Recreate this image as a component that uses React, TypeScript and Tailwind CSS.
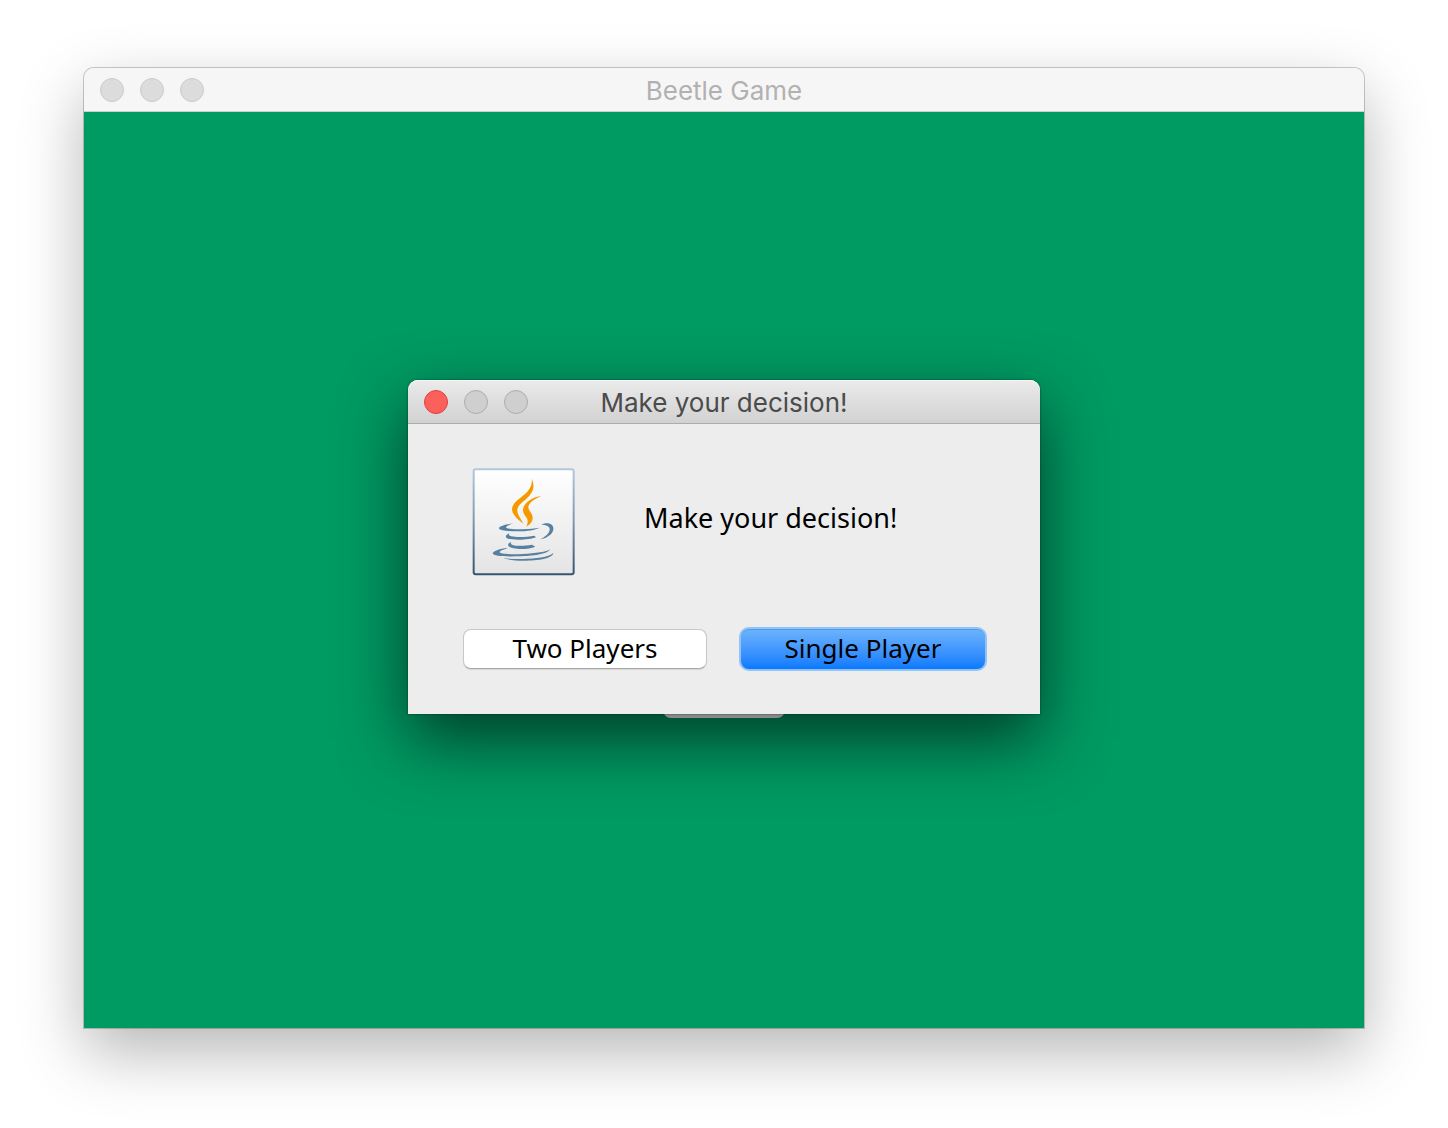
import React from "react";

function TrafficLights({ active = false }: { active?: boolean }) {
  const idle = active
    ? "border-[#acacac] bg-[#cfcfcf]"
    : "border-[#cbcbcb] bg-[#dcdcdc]";
  const close = active ? "border-[#e2403f] bg-[#fc605c]" : idle;
  return (
    <div className="flex gap-4">
      <button aria-label="Close" className={`size-6 rounded-full border ${close}`} />
      <button aria-label="Minimize" className={`size-6 rounded-full border ${idle}`} />
      <button aria-label="Zoom" className={`size-6 rounded-full border ${idle}`} />
    </div>
  );
}

function JavaIcon() {
  return (
    <svg viewBox="25 26 312 324" className="h-[108px] w-[104px] shrink-0" role="img" aria-label="Java">
      <defs>
        <linearGradient id="paper" x1="0" y1="0" x2="0" y2="1">
          <stop offset="0" stopColor="#ffffff" />
          <stop offset="1" stopColor="#e4e4e4" />
        </linearGradient>
        <linearGradient id="frame" x1="0" y1="0" x2="0" y2="1">
          <stop offset="0" stopColor="#b3c6dc" />
          <stop offset="0.5" stopColor="#7f98b2" />
          <stop offset="1" stopColor="#365470" />
        </linearGradient>
      </defs>
      <rect x="30" y="30" width="300" height="315" rx="6" fill="url(#paper)" stroke="url(#frame)" strokeWidth="6" />
      <g fill="#f49a00">
        <path d="M204 58C213 78 211 92 197 109C182 126 162 136 161 151C160 165 171 177 179 193C159 178 145 164 145 149C146 127 174 116 191 97C202 84 206 73 204 58Z" />
        <path d="M234 109C213 118 196 129 194 142C193 154 207 161 207 175C207 187 199 195 188 202C193 190 194 182 187 173C180 163 176 156 179 146C184 127 209 113 234 109Z" />
      </g>
      <g fill="#5780a1">
        <path d="M149 192C134 194 106 200 106 207C107 215 139 216 163 216C190 216 215 212 228 205C206 209 183 210 161 210C143 210 127 208 127 204C127 199 140 196 149 192Z" />
        <path d="M233 196C244 190 258 190 265 197C273 206 269 219 259 227C251 234 240 239 229 240C244 233 256 223 258 212C260 200 247 196 233 196Z" />
        <path d="M137 222C129 225 124 230 128 235C136 244 197 243 217 234L212 229C193 233 159 235 143 231C136 229 134 226 137 222Z" />
        <path d="M143 248C135 250 131 256 135 261C144 271 193 272 215 262L205 256C186 260 160 261 147 257C141 255 140 252 143 248Z" />
        <path d="M134 265C115 266 87 275 87 282C88 291 128 292 164 291C208 290 252 285 259 270C249 278 216 282 177 284C145 286 109 284 108 279C108 273 122 270 134 265Z" />
        <path d="M269 281C267 298 222 304 181 304C155 304 130 301 120 297C137 298 155 300 177 299C217 298 254 294 269 281Z" />
      </g>
    </svg>
  );
}

function Dialog() {
  return (
    <section
      role="dialog"
      aria-label="Make your decision!"
      className="w-full max-w-[632px] rounded-t-[10px] bg-[#ededed] shadow-[0_0_2px_rgba(0,0,0,0.6),0_26px_66px_rgba(0,0,0,0.6)]"
    >
      <header className="grid h-11 grid-cols-[1fr_auto_1fr] items-center rounded-t-[10px] bg-linear-to-b from-[#ebebeb] to-[#d1d1d1] px-4 shadow-[inset_0_1px_0_#f6f6f6,inset_0_-1px_0_#acacac]">
        <TrafficLights active />
        <h2 className="pt-0.5 text-[26px] leading-8 text-[#4b4b4b]">Make your decision!</h2>
      </header>
      <div className="flex items-center gap-17 px-16 pt-11">
        <JavaIcon />
        <p className="pb-2 font-['Noto_Sans',sans-serif] text-[27px] leading-8 text-black">Make your decision!</p>
      </div>
      <div className="flex items-center gap-8 pt-[51px] pr-[53px] pb-[43px] pl-[55px] font-['Noto_Sans',sans-serif] text-[26px] leading-8 text-black">
        <button className="flex h-10 grow items-center justify-center rounded-lg border border-[#c8c8c8] border-b-[#a9a9a9] bg-white pb-0.5 shadow-[0_1px_1px_rgba(0,0,0,0.1)]">
          Two Players
        </button>
        <button className="flex h-11 w-[248px] items-center justify-center rounded-[10px] border-2 border-[#94c2f3] bg-linear-to-b from-[#6cb3fb] to-[#057aff] pb-0.5 shadow-[inset_0_1px_0_#4a9cf5]">
          Single Player
        </button>
      </div>
    </section>
  );
}

export default function App() {
  return (
    <div className="flex min-h-screen flex-col bg-white px-21 pt-17 pb-25 font-[Inter,sans-serif]">
      <main className="flex grow flex-col rounded-t-[10px] shadow-[0_0_0_1px_rgba(0,0,0,0.2),0_24px_64px_rgba(0,0,0,0.29)]">
        <header className="grid h-11 grid-cols-[1fr_auto_1fr] items-center rounded-t-[10px] bg-[#f6f6f6] px-4 shadow-[inset_0_-1px_0_#cfcfcf]">
          <TrafficLights />
          <h1 className="pt-0.5 text-[26px] leading-8 text-[#b1b1b1]">Beetle Game</h1>
        </header>
        <div className="relative flex grow flex-col items-center bg-[#009a63] pt-[566px]">
          <button aria-label="Start" className="h-10 w-[122px] rounded-lg bg-white" />
          <div className="absolute inset-0 flex items-start justify-center pt-[268px]">
            <Dialog />
          </div>
        </div>
      </main>
    </div>
  );
}
